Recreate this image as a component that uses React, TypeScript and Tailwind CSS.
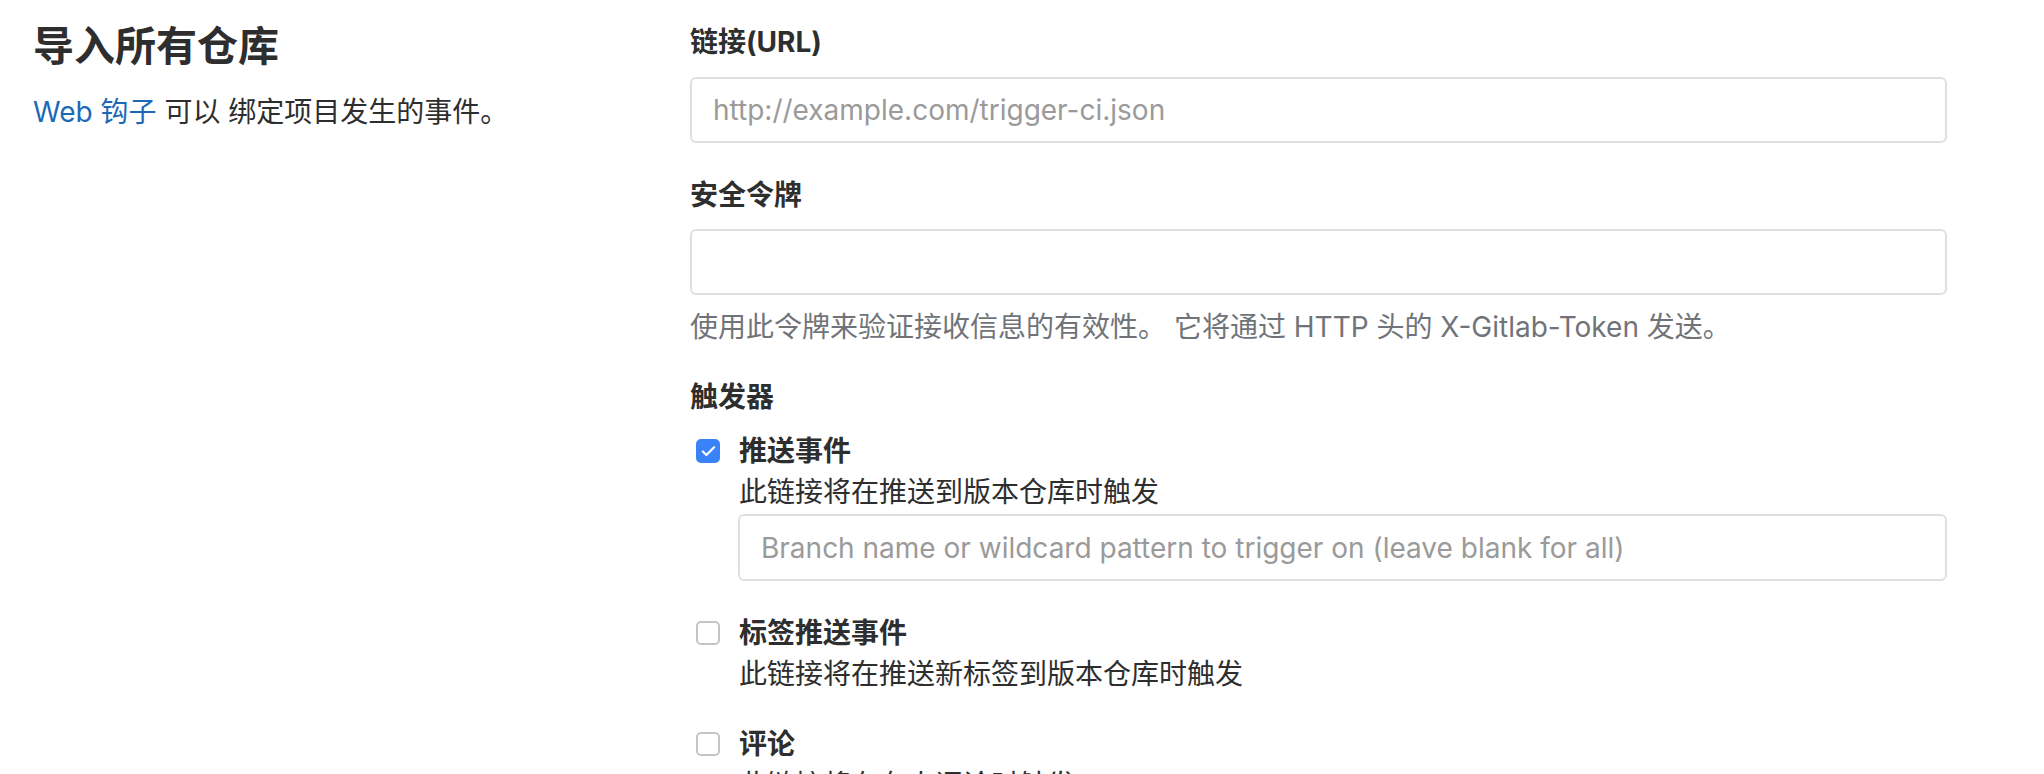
import { Check } from 'lucide-react'

const font = { fontFamily: 'Inter, "Noto Sans CJK SC", sans-serif' }

function CheckBox({ checked }: { checked: boolean }) {
  return checked ? (
    <div className="w-[24px] h-[24px] rounded-[5px] bg-[#3a82f7] flex items-center justify-center shrink-0">
      <Check className="w-[17px] h-[17px] text-white" strokeWidth={3} />
    </div>
  ) : (
    <div className="w-[24px] h-[24px] rounded-[5px] border-2 border-[#c4c4c4] bg-white shrink-0" />
  )
}

function TriggerRow({ checked, label, hint }: { checked: boolean; label: string; hint: string }) {
  return (
    <div>
      <div className="flex items-center h-[40px]">
        <div className="w-[49px] pl-[6px] flex items-center">
          <CheckBox checked={checked} />
        </div>
        <span className="text-[28px] leading-[40px] font-bold text-[#2e2e2e]">{label}</span>
      </div>
      <p className="mt-[2px] pl-[49px] text-[28px] leading-[39px] h-[39px] text-[#2e2e2e]">{hint}</p>
    </div>
  )
}

export default function App() {
  return (
    <div className="w-[2044px] h-[774px] overflow-hidden bg-white flex" style={font}>
      <div className="w-[690px] shrink-0 pl-[33px]">
        <h4 className="mt-[21px] h-[50px] text-[41px] leading-[50px] font-bold text-[#2e2e2e]">导入所有仓库</h4>
        <p className="mt-[21px] h-[40px] text-[28px] leading-[40px] text-[#2e2e2e]">
          <a className="text-[#1b69b6]">Web 钩子</a> 可以 绑定项目发生的事件。
        </p>
      </div>

      <div className="w-[1257px] shrink-0">
        <label className="block mt-[22px] h-[40px] text-[28px] leading-[40px] font-bold text-[#2e2e2e]">链接(URL)</label>
        <input
          className="block mt-[15px] w-full h-[66px] border-2 border-[#e0e0e0] rounded-[6px] px-[21px] text-[28px] text-[#2e2e2e] placeholder:text-[#9a9a9a] outline-none"
          placeholder="http://example.com/trigger-ci.json"
        />

        <label className="block mt-[32px] h-[40px] text-[28px] leading-[40px] font-bold text-[#2e2e2e]">安全令牌</label>
        <input className="block mt-[14px] w-full h-[66px] border-2 border-[#e0e0e0] rounded-[6px] px-[21px] text-[28px] outline-none" />
        <p className="mt-[12px] h-[40px] text-[28px] leading-[40px] text-[#707479]">
          使用此令牌来验证接收信息的有效性。 它将通过 HTTP 头的 X-Gitlab-Token 发送。
        </p>

        <label className="block mt-[30px] h-[40px] text-[28px] leading-[40px] font-bold text-[#2e2e2e]">触发器</label>

        <div className="mt-[14px]">
          <TriggerRow checked label="推送事件" hint="此链接将在推送到版本仓库时触发" />
          <div className="pl-[48px] mt-[2px]">
            <input
              className="block w-full h-[67px] border-2 border-[#e0e0e0] rounded-[6px] px-[21px] text-[28px] placeholder:text-[#9a9a9a] outline-none"
              placeholder="Branch name or wildcard pattern to trigger on (leave blank for all)"
            />
          </div>
        </div>

        <div className="mt-[32px]">
          <TriggerRow checked={false} label="标签推送事件" hint="此链接将在推送新标签到版本仓库时触发" />
        </div>

        <div className="mt-[30px]">
          <TriggerRow checked={false} label="评论" hint="此链接将在有人评论时触发" />
        </div>
      </div>
    </div>
  )
}
